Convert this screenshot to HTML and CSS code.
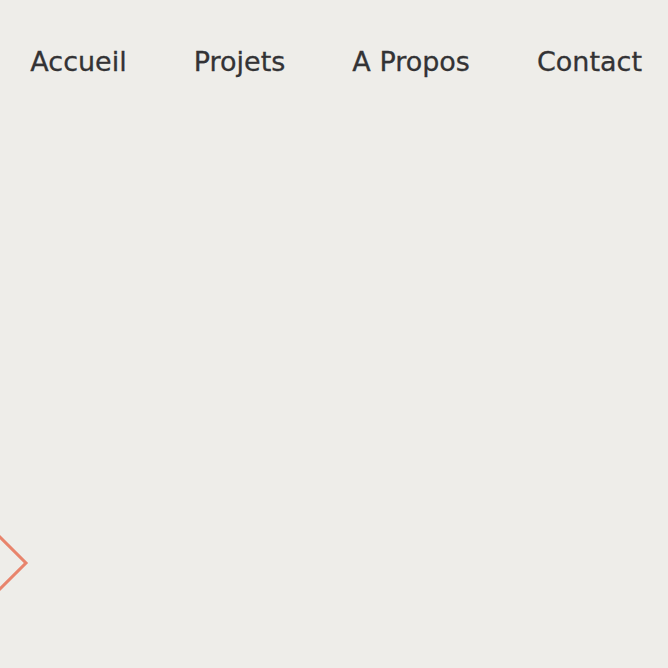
FILE: index.html
```html
<!DOCTYPE html>
<html lang="fr">
<head>
<meta charset="utf-8">
<title>Accueil</title>
<link rel="stylesheet" href="styles.css">
</head>
<body>
<header class="topbar">
  <nav class="nav">
    <a class="nav-link" href="#">Accueil</a>
    <a class="nav-link" href="#">Projets</a>
    <a class="nav-link" href="#">A Propos</a>
    <a class="nav-link" href="#">Contact</a>
  </nav>
</header>
<main class="hero">
  <span class="diamond"></span>
</main>
</body>
</html>
```
FILE: styles.css
```css
html, body {
  margin: 0;
  padding: 0;
}
body {
  background: #eeede9;
  width: 668px;
  height: 668px;
  overflow: hidden;
  font-family: "DejaVu Sans", "Open Sans", sans-serif;
  color: #333335;
}
.topbar {
  display: flex;
  justify-content: flex-end;
  padding: 45px 26px 0 0;
}
.nav {
  display: flex;
  gap: 67px;
}
.nav-link {
  color: #333335;
  text-decoration: none;
  font-size: 27px;
  line-height: 34px;
  letter-spacing: 0;
  -webkit-text-stroke: 0.3px #333335;
}
.hero {
  position: relative;
  height: 589px;
}
.diamond {
  position: absolute;
  left: -25px;
  top: 462px;
  width: 38px;
  height: 38px;
  border: 3px solid #e8846c;
  transform: rotate(45deg);
}
```
